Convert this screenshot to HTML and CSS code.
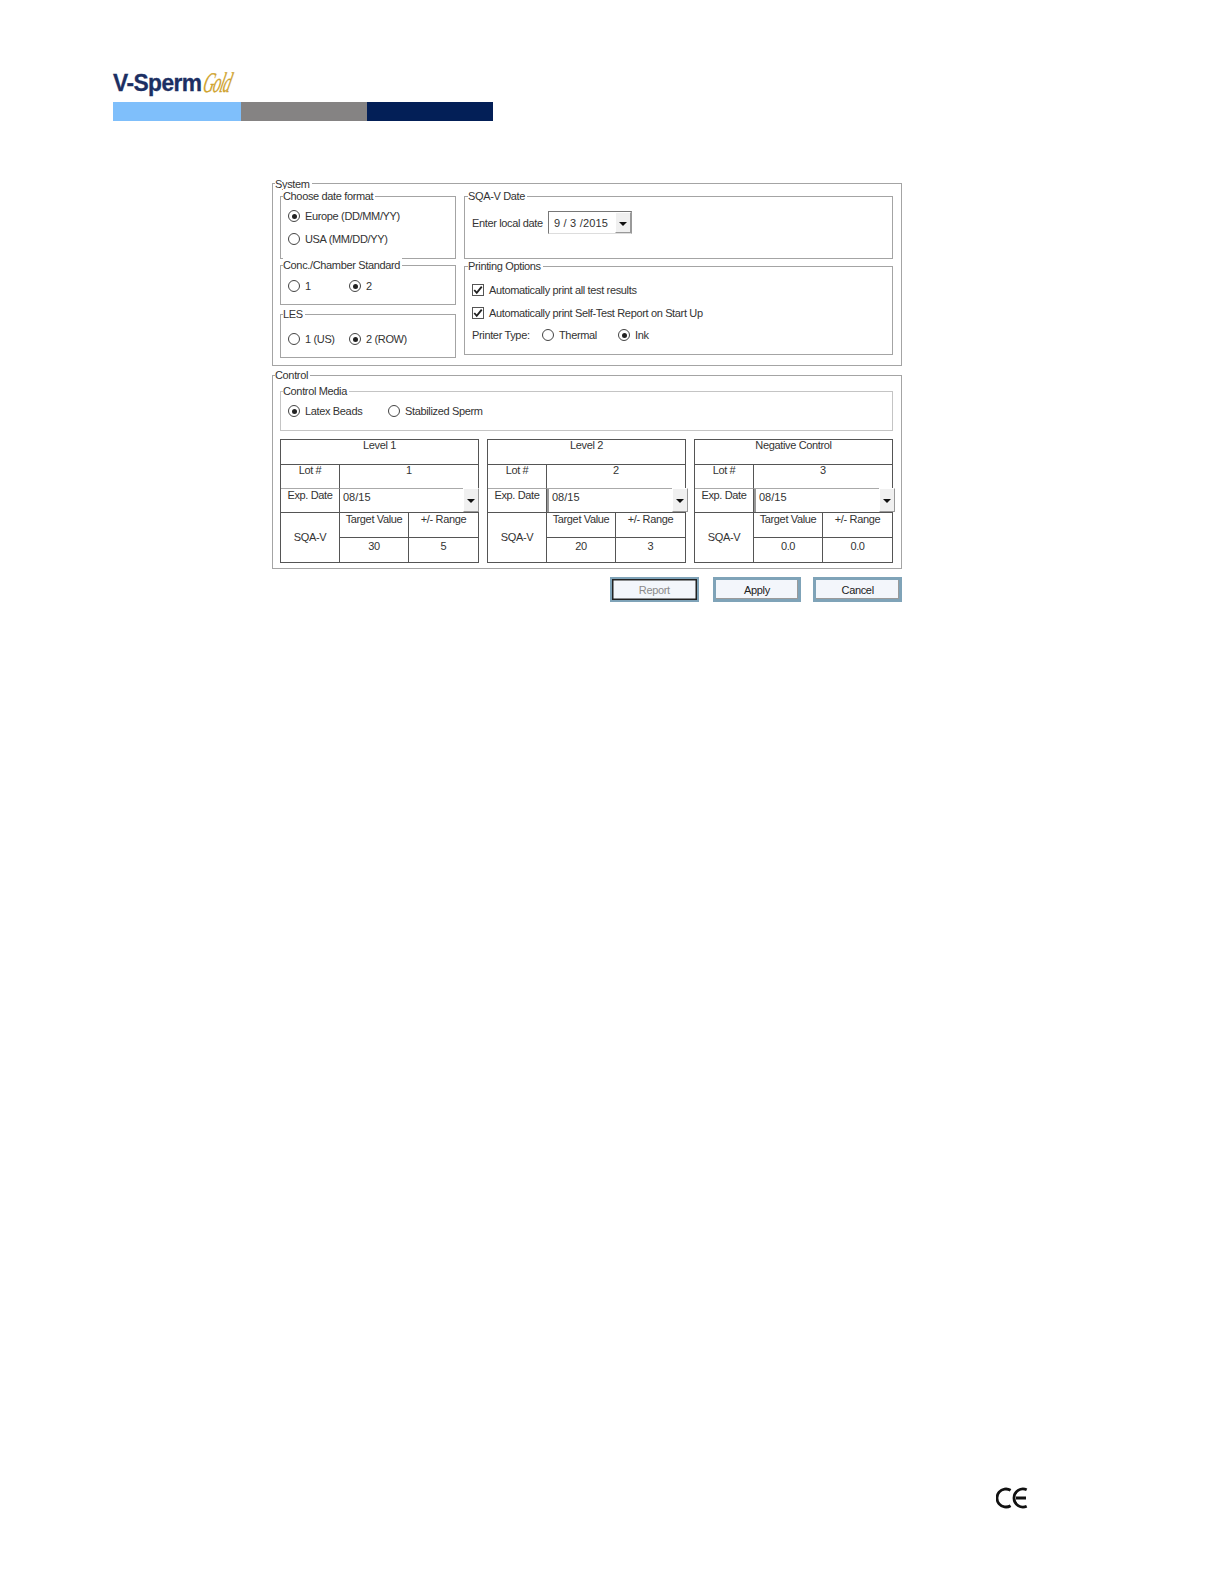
FILE: index.html
```html
<!DOCTYPE html>
<html lang="en">
<head>
<meta charset="utf-8">
<title>V-Sperm Gold</title>
<link rel="stylesheet" href="styles.css">
</head>
<body>
<div class="page">
  <header class="brand">
    <div class="logo"><span class="logo-main">V-Sperm</span><span class="logo-gold">Gold</span></div>
    <div class="stripe"><span class="s1"></span><span class="s2"></span><span class="s3"></span></div>
  </header>

  <main class="dialog">
    <section class="group system">
      <span class="legend">System</span>
      <div class="system-grid">
        <div class="col-left">
          <div class="group g-date">
            <span class="legend">Choose date format</span>
            <div class="opt r1"><i class="radio on"></i>Europe (DD/MM/YY)</div>
            <div class="opt r2"><i class="radio"></i>USA (MM/DD/YY)</div>
          </div>
          <div class="group g-conc">
            <span class="legend">Conc./Chamber Standard</span>
            <div class="opt-row"><div class="opt w60"><i class="radio"></i>1</div><div class="opt"><i class="radio on"></i>2</div></div>
          </div>
          <div class="group g-les">
            <span class="legend">LES</span>
            <div class="opt-row"><div class="opt w60"><i class="radio"></i>1 (US)</div><div class="opt"><i class="radio on"></i>2 (ROW)</div></div>
          </div>
        </div>
        <div class="col-right">
          <div class="group g-sqa">
            <span class="legend">SQA-V Date</span>
            <div class="date-row">
              <span class="date-label">Enter local date</span>
              <div class="datebox"><span class="date-val">9 / 3 /2015</span><span class="drop"><i class="arrow"></i></span></div>
            </div>
          </div>
          <div class="group g-print">
            <span class="legend">Printing Options</span>
            <div class="opt chk c1"><i class="check"><svg viewBox="0 0 12 12" width="10" height="10"><path d="M1.5 6l3 3.5 6-7.5" fill="none" stroke="#222" stroke-width="2.2"/></svg></i>Automatically print all test results</div>
            <div class="opt chk c2"><i class="check"><svg viewBox="0 0 12 12" width="10" height="10"><path d="M1.5 6l3 3.5 6-7.5" fill="none" stroke="#222" stroke-width="2.2"/></svg></i>Automatically print Self-Test Report on Start Up</div>
            <div class="printer">
              <span class="printer-label">Printer Type:</span>
              <div class="opt w76"><i class="radio"></i>Thermal</div>
              <div class="opt"><i class="radio on"></i>Ink</div>
            </div>
          </div>
        </div>
      </div>
    </section>

    <section class="group control">
      <span class="legend">Control</span>
      <div class="group g-media">
        <span class="legend">Control Media</span>
        <div class="opt-row"><div class="opt w99"><i class="radio on"></i>Latex Beads</div><div class="opt"><i class="radio"></i>Stabilized Sperm</div></div>
      </div>
      <div class="levels">
        <div class="level">
          <div class="cell head">Level 1</div>
          <div class="cell lab">Lot #</div><div class="cell lot">1</div>
          <div class="cell lab lab-exp">Exp. Date</div>
          <div class="cell expiry"><span class="exp-val">08/15</span><span class="drop over"><i class="arrow"></i></span></div>
          <div class="cell sqa">SQA-V</div>
          <div class="cell">Target Value</div><div class="cell">+/- Range</div>
          <div class="cell val">30</div><div class="cell val">5</div>
        </div>
        <div class="level">
          <div class="cell head">Level 2</div>
          <div class="cell lab">Lot #</div><div class="cell lot">2</div>
          <div class="cell lab lab-exp">Exp. Date</div>
          <div class="cell expiry"><span class="exp-val">08/15</span><span class="drop over"><i class="arrow"></i></span></div>
          <div class="cell sqa">SQA-V</div>
          <div class="cell">Target Value</div><div class="cell">+/- Range</div>
          <div class="cell val">20</div><div class="cell val">3</div>
        </div>
        <div class="level">
          <div class="cell head">Negative Control</div>
          <div class="cell lab">Lot #</div><div class="cell lot">3</div>
          <div class="cell lab lab-exp">Exp. Date</div>
          <div class="cell expiry"><span class="exp-val">08/15</span><span class="drop over"><i class="arrow"></i></span></div>
          <div class="cell sqa">SQA-V</div>
          <div class="cell">Target Value</div><div class="cell">+/- Range</div>
          <div class="cell val">0.0</div><div class="cell val">0.0</div>
        </div>
      </div>
    </section>

    <div class="buttons">
      <button class="btn default" disabled>Report</button>
      <button class="btn">Apply</button>
      <button class="btn">Cancel</button>
    </div>
  </main>

  <footer class="ce">
    <svg width="33" height="22" viewBox="0 0 33 22"><path d="M14.6 3.3A9 9 0 1 0 14.6 18.7M30.7 2.8A9 9 0 1 0 30.7 19.2M20 11H30" fill="none" stroke="#111" stroke-width="2.8"/></svg>
  </footer>
</div>
</body>
</html>
```
FILE: styles.css
```css
* { box-sizing: border-box; }
html, body { margin: 0; padding: 0; background: #fff; }
body { font-family: "Liberation Sans", Arial, sans-serif; font-size: 11px; letter-spacing: -0.35px; color: #333; }
.page { width: 1224px; height: 1584px; display: flex; flex-direction: column; padding: 64px 0 0 113px; }

.brand { width: 380px; }
.logo { height: 38px; display: flex; align-items: center; }
.logo-main { display: inline-block; width: 91px; font-size: 24.5px; font-weight: bold; color: #1c2f63; letter-spacing: -0.6px; line-height: 30px; transform: scaleX(.93); transform-origin: left center; white-space: nowrap; -webkit-text-stroke: 0.3px #1c2f63; }
.logo-gold { display: inline-block; width: 29px; font-family: "Liberation Serif", serif; font-style: italic; font-size: 27px; color: #cfa32e; letter-spacing: -1.5px; line-height: 30px; transform: skewX(-14deg) scale(.56, 1.05); transform-origin: left center; white-space: nowrap; -webkit-text-stroke: 0.3px #cfa32e; }
.stripe { display: flex; height: 19px; }
.s1 { width: 128px; background: #7fbffb; }
.s2 { width: 126px; background: #858383; }
.s3 { width: 126px; background: #031f57; }

.dialog { margin: 62px 0 0 159px; width: 630px; }
.group { position: relative; border: 1px solid #a4a4a4; }
.legend { position: absolute; top: -8px; left: 2px; background: #fff; padding-right: 2px; line-height: 14px; white-space: nowrap; }
.system > .legend { top: -7px; }
.col-right .legend { left: 3px; }

.system { height: 183px; padding: 12px 8px 0 7px; }
.control { height: 194px; margin-top: 9px; padding: 15px 8px 0 7px; }
.system-grid { display: flex; gap: 8px; }
.col-left { width: 176px; display: flex; flex-direction: column; }
.col-right { flex: 1; display: flex; flex-direction: column; }
.g-date { height: 63px; padding: 12px 7px 0 7px; }
.g-conc { height: 40px; margin-top: 6px; padding: 13px 7px 0 7px; }
.g-les { height: 44px; margin-top: 9px; padding: 17px 7px 0 7px; }
.g-sqa { height: 63px; padding: 14px 7px 0 7px; }
.g-print { height: 89px; margin-top: 7px; padding: 16px 7px 0 7px; }

.opt { display: flex; align-items: center; height: 14px; white-space: nowrap; }
.opt-row { display: flex; align-items: center; }
.r2 { margin-top: 9px; }
.w60 { width: 61px; }
.w76 { width: 76px; }
.w99 { width: 100px; }
.radio { width: 12px; height: 12px; border: 1.5px solid #444; border-radius: 50%; margin-right: 5px; flex: none; display: flex; align-items: center; justify-content: center; background: #fff; }
.radio.on::after { content: ""; width: 5px; height: 5px; border-radius: 50%; background: #222; }
.check { width: 12px; height: 12px; border: 1px solid #555; margin-right: 5px; flex: none; display: flex; align-items: center; justify-content: center; background: #fff; }
.check svg { display: block; }
.c2 { margin-top: 9px; }
.printer { display: flex; align-items: center; margin-top: 8px; }
.printer-label { width: 70px; }

.date-row { display: flex; align-items: center; }
.date-label { width: 76px; white-space: nowrap; }
.datebox { width: 84px; height: 23px; border: 1px solid #777; border-right-color: #999; border-bottom-color: #ddd; display: flex; align-items: center; justify-content: space-between; padding-left: 5px; background: #fff; }
.date-val { letter-spacing: 0.2px; }
.drop { width: 16px; height: 21px; background: #f0f0f0; border: 1px solid #fff; border-right-color: #999; border-bottom-color: #999; display: flex; align-items: center; justify-content: center; }
.arrow { width: 0; height: 0; border-left: 4px solid transparent; border-right: 4px solid transparent; border-top: 4px solid #111; margin-top: 2px; }

.g-media { height: 40px; padding: 12px 7px 0 7px; border-color: #c4c4c4; }
.levels { display: flex; gap: 8px; margin-top: 8px; }
.level { flex: 0 0 199px; display: grid; grid-template-columns: 58px 69px 70px; grid-template-rows: 24px 24px 24px 25px 25px; border: 1px solid #555; position: relative; }
.cell { display: flex; align-items: center; justify-content: center; border-left: 1px solid #555; border-top: 1px solid #555; padding-bottom: 12px; white-space: nowrap; }
.head { grid-column: 1 / 4; border: 0; padding-bottom: 14px; }
.lab { border-left: 0; padding-bottom: 14px; }
.lot { grid-column: 2 / 4; padding-bottom: 14px; }
.lab-exp { border-top-color: #aaa; padding-bottom: 12px; }
.expiry { grid-column: 2 / 4; justify-content: flex-start; padding: 0 0 8px 3px; border-top-color: #aaa; position: relative; }
.level + .level .expiry { padding-left: 5px; box-shadow: inset 2px 0 0 #999; }
.exp-val { letter-spacing: 0; }
.val { padding-bottom: 9px; }
.drop.over { position: absolute; right: -3px; top: -1px; width: 16px; height: 24px; }
.level:first-child .drop.over { right: -1px; }
.sqa { grid-row: 4 / 6; grid-column: 1; border-left: 0; padding-bottom: 2px; }

.buttons { display: flex; margin: 8px 0 0 338px; }
.btn { width: 89px; height: 25px; margin-right: 14px; border: 3px solid #7fa3b8; background: #f3f6fb; box-shadow: inset -1px -1px 0 #9a9a9a; font: inherit; letter-spacing: inherit; color: #222; padding: 0; outline: none; }
.btn + .btn + .btn { margin-left: -2px; margin-right: 0; }
.btn.default { border-width: 2px; box-shadow: inset 0 0 0 1.5px #222; color: #8a8a8a; }

.ce { margin: auto 0 0 883px; padding-bottom: 75px; }
.ce svg { display: block; }
```
